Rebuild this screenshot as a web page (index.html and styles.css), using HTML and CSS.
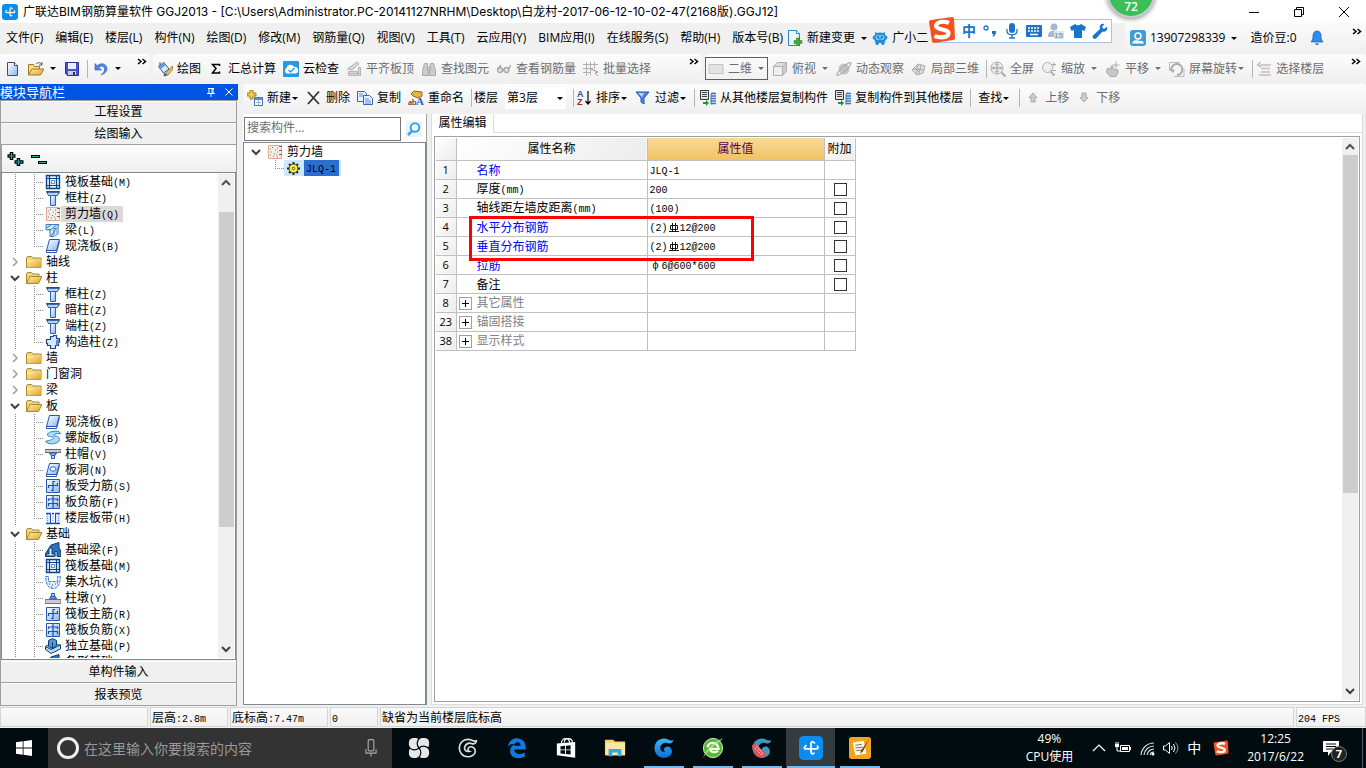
FILE: index.html
```html
<!DOCTYPE html>
<html lang="zh-CN">
<head>
<meta charset="utf-8">
<title>广联达BIM钢筋算量软件 GGJ2013</title>
<link rel="stylesheet" href="styles.css">
</head>
<body>
<svg class="defs" aria-hidden="true">
<defs>
<linearGradient id="gBlue" x1="0" y1="0" x2="1" y2="1"><stop offset="0" stop-color="#fff"/><stop offset="1" stop-color="#8fb4f0"/></linearGradient>
<linearGradient id="gGold" x1="0" y1="0" x2="1" y2="1"><stop offset="0" stop-color="#fff2b0"/><stop offset="1" stop-color="#e0a020"/></linearGradient>
<linearGradient id="gG" x1="0" y1="0" x2="0" y2="1"><stop offset="0" stop-color="#3fb8f8"/><stop offset="1" stop-color="#0b6fd8"/></linearGradient>
</defs>
<symbol id="app" viewBox="0 0 16 16"><rect width="16" height="16" rx="3" fill="#0d8cf0"/><path d="M10.300 4.600Q8.300 2.600 8 5.300V10.500Q8.200 12.600 9.900 11.500M4.600 6.400Q2.400 8.600 4.800 8.600H11.200Q13.500 8.600 12.300 6.800" fill="none" stroke="#fff" stroke-width="1.200" stroke-linecap="round"/></symbol>
<symbol id="new" viewBox="0 0 16 16"><path d="M2.500 1.500h7l3 3v10h-10z" fill="url(#gBlue)" stroke="#34507e"/><path d="M9.500 1.500v3h3" fill="#fff" stroke="#34507e"/></symbol>
<symbol id="open" viewBox="0 0 16 16"><path d="M.5 14V3.500h5l1 2h5V8" fill="#f8dc80" stroke="#a87820"/><path d="M.5 14L4 8h12l-3.500 6z" fill="url(#gGold)" stroke="#a87820"/><path d="M8 3c2-2 4-1.500 5.500 0M14 1v3h-3" fill="none" stroke="#456"/></symbol>
<symbol id="save" viewBox="0 0 16 16"><path d="M1.500 1.500h13v13h-11l-2-2z" fill="#4a55c8" stroke="#28308a"/><path d="M4 2h8v6H4z" fill="#e8ecff"/><path d="M4 10h8v4H4z" fill="#c8ccd8"/><path d="M9 11h2v3H9z" fill="#28308a"/></symbol>
<symbol id="undo" viewBox="0 0 16 16"><path d="M2 2.500V9h6.500L6 6.500c3-3 6-.5 5.500 2.500-.4 2-1.500 3.500-3.500 5C13 12.500 15 9 13.500 5.500 12 2.200 7.500 1.500 4.300 4.800z" fill="#4e86e0" stroke="#2a5cb8" stroke-width=".6"/></symbol>
<symbol id="draw" viewBox="0 0 16 16"><path d="M1.500 5L7 1.500l5 6.500-5.500 4z" fill="#dfe9f6" stroke="#345a88"/><path d="M3 1v7" stroke="#345a88"/><path d="M1.500 5L7 1.500 9 4 3.500 8z" fill="#6b9bd2"/><path d="M15.500 5L9 12l-1.500 3L11 14l5-6z" fill="#f4c450" stroke="#7a5c20" stroke-width=".7"/><path d="M7 12.500c2-.5 3 .5 2.500 2l-3 .8z" fill="#335f9a"/></symbol>
<symbol id="sum" viewBox="0 0 16 16"><path d="M11.500 5V3.500h-7l3.500 4-3.500 4.500h7V10.500" fill="none" stroke="#000" stroke-width="1.500"/></symbol>
<symbol id="cloud" viewBox="0 0 16 16"><rect width="16" height="16" rx="1" fill="#249be8"/><path d="M4 12.500a3 3 0 0 1-.5-5.500A4 4 0 0 1 11 6a3.200 3.200 0 0 1 1.500 6.500z" fill="#fff"/><path d="M5.500 9l2 2 4-4" fill="none" stroke="#249be8" stroke-width="1.500"/></symbol>
<symbol id="level" viewBox="0 0 16 16"><g fill="#d8d8d8" stroke="#b4b4b4"><path d="M1.500 8L11 .8l2 2.200-7 6z"/><path d="M2.500 10.500h9v4h-9zM12.500 6.500h2v8h-2z"/><path d="M3 12.500h8" fill="none"/></g></symbol>
<symbol id="bino" viewBox="0 0 16 16"><g fill="#ccc" stroke="#aaa"><path d="M3.500 2.500h3v4l1 8h-6v-5zM9.500 2.500h3l2 7v5h-6v-8z"/><path d="M6.500 6.500h3v3h-3z"/></g></symbol>
<symbol id="glass" viewBox="0 0 16 16"><g fill="#e4e4e4" stroke="#a5a5a5" stroke-width="1.300"><circle cx="4" cy="9" r="2.500"/><circle cx="10.500" cy="9" r="2.500"/><path d="M6.500 9h1.500M13 8l1.500-4M2 8L5 4" fill="none"/></g></symbol>
<symbol id="batch" viewBox="0 0 16 16"><g fill="none" stroke="#b0b0b0"><path d="M3.500 1v14M7.500 1v13M11.500 1v7M0 3.500h15M0 7.500h10M0 11.500h8"/><path d="M8 8l7 3-3 1 3 3" fill="#eee" stroke="#999"/></g></symbol>
<symbol id="rect" viewBox="0 0 16 16"><path d="M1 3.500h14v9H1z" fill="#e2e2e2" stroke="#c4c4c4"/></symbol>
<symbol id="cube" viewBox="0 0 16 16"><g stroke="#b0b0b0"><path d="M1.500 5.500h9v9h-9z" fill="#eee"/><path d="M1.500 5.500l4-4h9l-4 4z" fill="#dcdcdc"/><path d="M10.500 5.500l4-4v9l-4 4z" fill="#ccc"/></g></symbol>
<symbol id="orbit" viewBox="0 0 16 16"><circle cx="8" cy="8" r="5.500" fill="#c6c6c6"/><path d="M1 14c2 1 13-6 14-12-2-2-15 9-14 12z" fill="none" stroke="#aaa" stroke-width="1.200"/></symbol>
<symbol id="part" viewBox="0 0 16 16"><g fill="#e0e0e0" stroke="#aaa"><path d="M1 9l6-6 7 2-2 7-6 2z"/><path d="M3.500 6.500l6 6M7 3l-2 11M10 4l-2 9M2 8l11 1" fill="none"/></g></symbol>
<symbol id="full" viewBox="0 0 16 16"><circle cx="7" cy="7" r="6" fill="#eee" stroke="#aaa"/><path d="M7 2.500v9M2.500 7h9M5.500 4L7 2.500 8.500 4M5.500 10L7 11.500 8.500 10M4 5.500L2.500 7 4 8.500M10 5.500L11.500 7 10 8.500" fill="none" stroke="#999"/><path d="M11.500 11.500l4 4" stroke="#aaa" stroke-width="2"/></symbol>
<symbol id="zoom" viewBox="0 0 16 16"><circle cx="6.500" cy="6.500" r="5" fill="#eee" stroke="#b0b0b0"/><path d="M9.500 10.500l4 4" stroke="#b0b0b0" stroke-width="2"/><path d="M11 3.500h4M13 1.500v4M11 9.500h4" stroke="#aaa"/></symbol>
<symbol id="pan" viewBox="0 0 16 16"><path d="M11 .5v7M7.500 4h7" stroke="#aaa"/><path d="M2 8l2-1 2 2V5h2v3l5 1v3l-2 3.500H5L1.500 11z" fill="#c8c8c8" stroke="#aaa"/></symbol>
<symbol id="rot" viewBox="0 0 16 16"><path d="M.5 1.500h10M.5 1.500v8M5 15.500h10v-8" fill="none" stroke="#bbb"/><path d="M2.500 10A5.500 5.500 0 1 1 8 14" fill="none" stroke="#aaa" stroke-width="2"/><path d="M1 8l2.500 4L6 9z" fill="#aaa"/></symbol>
<symbol id="floors" viewBox="0 0 16 16"><path d="M4 3h11v2H2zM5 6.500h9v2H5zM5 10h9v2H5zM3 13h12v2H3z" fill="#ccc"/><path d="M5 1L1 4l4 2" fill="none" stroke="#aaa"/></symbol>
<symbol id="add" viewBox="0 0 16 16"><path d="M3 0h3v3h3v3H6v3H3V6H0V3h3z" fill="#f4cf40" stroke="#8a6a10" stroke-width=".8"/><path d="M7.500 7.500h8v8h-8z" fill="#fff" stroke="#4872b8"/><path d="M8 8h7v2H8z" fill="#5a8ad8"/><path d="M9 12.500h5M11.500 10v5" stroke="#9ab4e0"/></symbol>
<symbol id="del" viewBox="0 0 16 16"><path d="M2 2l11 12M13 1.500L2 14" stroke="#333" stroke-width="1.800" fill="none"/></symbol>
<symbol id="copy" viewBox="0 0 16 16"><g fill="#e6f0ff" stroke="#3a66b0"><path d="M.5 1.500h7l2 2v8h-9z"/><path d="M6.500 5.500h6l3 3v6h-9z"/></g><path d="M2 4h4M2 6h4M8 9h4M8 11h6M8 13h6" stroke="#5a8ad8" fill="none"/></symbol>
<symbol id="filter" viewBox="0 0 16 16"><path d="M1 2h13L9 8v6l-3-2V8z" fill="#4a86e4" stroke="#2456a8"/><path d="M3 3h6L7 7z" fill="#b8d4ff"/></symbol>
<symbol id="cpf" viewBox="0 0 16 16"><path d="M.5.500h8v9h-8z" fill="#e4e4e4" stroke="#333"/><path d="M2 2.500h5M2 4.500h5M2 6.500h5" stroke="#444"/><path d="M11 3.500h5M11 6h5M11 8.500h5M11 11h5M11 13.500h5" stroke="#3b72c0" stroke-width="1.400"/><path d="M13 2.500l-2 2v10" stroke="#3b72c0" fill="none"/><path d="M6 10l3 3-3 3v-2H3v-2h3z" fill="#179a3c"/></symbol>
<symbol id="up" viewBox="0 0 16 16"><path d="M8 3l4 4.500h-2V12H6V7.500H4z" fill="#ccc" stroke="#aaa"/></symbol>
<symbol id="down" viewBox="0 0 16 16"><path d="M8 12l4-4.500h-2V3H6v4.500H4z" fill="#ccc" stroke="#aaa"/></symbol>
<symbol id="chg" viewBox="0 0 16 16"><path d="M1.500.5h8l3 3v12h-11z" fill="#eaf6ff" stroke="#2f86b8"/><path d="M9.500.5v3h3" fill="#fff" stroke="#2f86b8"/><path d="M9.500 8h3v2.500H15v3h-2.500V16h-3v-2.500H7v-3h2.500z" fill="#3fae2a" stroke="#2b7d1c" stroke-width=".5"/></symbol>
<symbol id="robot" viewBox="0 0 16 16"><path d="M3 2l2 1a8 8 0 0 1 6 0l2-1v3c2.500.5 3.500 4 .5 5L12 15h-2l-1-2H7l-1 2H4l-1.500-5C-.5 9 .5 5.500 3 5z" fill="#1f8fe0"/><rect x="3.500" y="5" width="9" height="5" rx="2.500" fill="#6fc4f8"/><circle cx="6" cy="7" r=".8" fill="#124"/><circle cx="10" cy="7" r=".8" fill="#124"/><path d="M6.500 8.500q1.500 1 3 0" stroke="#124" fill="none" stroke-width=".6"/></symbol>
<symbol id="user" viewBox="0 0 16 16"><rect width="16" height="16" rx="3" fill="#3f9bd8"/><circle cx="8" cy="6" r="3" fill="none" stroke="#fff" stroke-width="1.500"/><path d="M2 13.500c1-3.500 3-3.500 6-3s5 0 6 3z" fill="#fff"/></symbol>
<symbol id="bell" viewBox="0 0 16 16"><path d="M8 1c3 0 4 2.500 4 5s.5 4 2 6H2c1.500-2 2-3.500 2-6s1-5 4-5z" fill="#2c8cf4" stroke="#1c5cb8" stroke-width=".7"/><path d="M6 13.500q2 3 4 0z" fill="#1c5cb8"/></symbol>
<symbol id="fold" viewBox="0 0 16 16"><path d="M.5 13.500v-10l1-1h4l1.500 1.500h8v9.500z" fill="#f2d27c" stroke="#a88838"/><path d="M1 5.500h14v8H1z" fill="url(#gGold)"/></symbol>
<symbol id="foldo" viewBox="0 0 16 16"><path d="M.5 13.500v-10l1-1h4l1.500 1.500h6V8" fill="#f2d27c" stroke="#a88838"/><path d="M.5 13.500L4 6.500h12l-3.500 7z" fill="url(#gGold)" stroke="#a88838"/></symbol>
<symbol id="raft" viewBox="0 0 16 16"><path d="M1.500 1.500h13v13h-13z" fill="#e6f1ff" stroke="#0e4486" stroke-width="1.400"/><path d="M4.500 1v14M11.500 1v14M1 4.500h14M1 11.500h14" stroke="#0e4486" stroke-width="1.200"/><path d="M6.500 6.500h3v3h-3z" fill="#fff" stroke="#5a90d0"/></symbol>
<symbol id="col" viewBox="0 0 16 16"><path d="M1.500 1.500h13l-2 4h-9z" fill="#b8d0f4" stroke="#2c60a8"/><path d="M5.500 5.500h5v10h-5z" fill="url(#gBlue)" stroke="#2c60c0"/><path d="M1.500 2h13" stroke="#1d4888" stroke-width="1.500"/></symbol>
<symbol id="wall" viewBox="0 0 16 16"><path d="M1.500 1.500h13v13h-13z" fill="#f1eeec" stroke="#e8a48c"/><path d="M13.500 2v12" stroke="#b05020" stroke-dasharray="1 3" stroke-width="3"/><path d="M3 5h1M5 3.500h1M8 6h1M4 8h1M7 9.500h1M10 8h1M3 11h1M6 12h1M9 11h1M10 13h1M10 4h1" stroke="#777"/></symbol>
<symbol id="beam" viewBox="0 0 16 16"><path d="M1 2.500h13l-2 4H9v8H5v-7L1 8z" fill="#d0e6f8" stroke="#3b80b8"/><path d="M1 6l5-3M4 9l9-7M6 14l6-8" stroke="#3b80b8"/><path d="M11 7l3-3v8l-4 3z" fill="#8cc0ea"/></symbol>
<symbol id="slab" viewBox="0 0 16 16"><path d="M4.500 1.500h10l-3 11h-10z" fill="url(#gBlue)" stroke="#2358b0"/><path d="M1.500 12.500v2h10l3-11" fill="none" stroke="#2358b0"/></symbol>
<symbol id="slabh" viewBox="0 0 16 16"><use href="#slab"/><ellipse cx="8" cy="7" rx="3" ry="2.200" fill="#fff" stroke="#2368d0"/></symbol>
<symbol id="spiral" viewBox="0 0 16 16"><path d="M14 1.500C9 .5 2 2 2.500 5c.5 2.500 6 1 6 3S4 10 .5 11.500c3 4 14 2.500 14-2S8 7 9 5s4-1 6.500-1.500z" fill="#a8dcf8" stroke="#2b88c8"/></symbol>
<symbol id="cap" viewBox="0 0 16 16"><path d="M0 3.500h16v3H0z" fill="#ccc" stroke="#666"/><path d="M4.500 7h7l-1.500 2.500H6z" fill="#8ab4f0" stroke="#2358b0"/><path d="M6.500 9.500h3v3h-3z" fill="#cfe0ff" stroke="#2358b0"/></symbol>
<symbol id="rb1" viewBox="0 0 16 16"><path d="M1.500 1.500h13v13h-13z" fill="url(#gBlue)" stroke="#2358c0"/><path d="M10 3.500H8v9H6M3.500 10V7.500h9V5" fill="none" stroke="#1c4cb0" stroke-width="1.200"/></symbol>
<symbol id="rb2" viewBox="0 0 16 16"><path d="M1.500 1.500h13v13h-13z" fill="url(#gBlue)" stroke="#2358c0"/><path d="M8 2v12M3.500 7V5h9v2M3.500 12v-2.500h9V12" fill="none" stroke="#1c4cb0" stroke-width="1.200"/></symbol>
<symbol id="strip" viewBox="0 0 16 16"><path d="M1 4h4v9H1zM11 4h4v9h-4z" fill="#dce8ff"/><path d="M1 3.500h5M10 3.500h5M7 3.500h2M1 13.500h14" stroke="#1c4cb0" stroke-width="1.500"/><path d="M5.500 4v9M10.500 4v9" stroke="#1c4cb0"/><path d="M8 4v9M2.500 4v9M13.500 4v9" stroke="#6a90d8" stroke-dasharray="1 1"/></symbol>
<symbol id="fbeam" viewBox="0 0 16 16"><path d="M.5 14.500v-3L6 3l8-2.500v5l2 4v5h-4v-5h-2v5z" fill="#2f70b8" stroke="#0e3c78"/><path d="M1 14v-2h3V6h3v6h3v2z" fill="#dcecff" stroke="#0e3c78"/></symbol>
<symbol id="pit" viewBox="0 0 16 16"><path d="M.5 2.500h3v5h9v-5h3C15 10 13 14.500 8 14.500S1 10 .5 2.500z" fill="#dcecff" stroke="#3878d0" stroke-dasharray="3 1"/><path d="M4 10h1M7 11h1M10 10h1M6 13h1M12 9h1" stroke="#2358b0"/></symbol>
<symbol id="pier" viewBox="0 0 16 16"><path d="M0 9.500h16v4H0z" fill="#ccc" stroke="#777"/><path d="M4.500 9l1.500-3h4l1.500 3z" fill="#6a9ce8" stroke="#2358b0"/><path d="M6.500 3.500h3v3h-3z" fill="#a8c8ff" stroke="#2358b0"/></symbol>
<symbol id="iso" viewBox="0 0 16 16"><path d="M.5 8.500L5 6l10.500 1v4L6 15.500l-5.500-4z" fill="#b8dcf4" stroke="#0e3c78"/><path d="M3.500 2.500l4-2 4 2v5l-4 3-4-2z" fill="#5a94cc" stroke="#0e3c78"/><path d="M7.500 4.500v6M.5 8.500l5.500 3 9.500-4.500" fill="none" stroke="#0e3c78"/></symbol>
<symbol id="gear" viewBox="0 0 16 16"><path d="M8 0v16M0 8h16M2.500 2.500l11 11M13.500 2.500l-11 11" stroke="#222" stroke-width="2.500"/><circle cx="8" cy="8" r="5.500" fill="#f8ee30" stroke="#222"/><circle cx="8" cy="8" r="1.500" fill="#fff" stroke="#222"/></symbol>
<symbol id="poly" viewBox="0 0 16 16"><path d="M5.500 2.500h3v-1h3v3h3v4h-1v3h-3v3h-5v-3h-3v-2h-1v-4h4z" fill="#d8e8ff" stroke="#1c4890" stroke-width="1.200"/><path d="M11 6l3-1v5l-3 2z" fill="#5a88c8"/></symbol>
<symbol id="mag" viewBox="0 0 16 16"><path d="M0 0h16v16H0z" fill="#e8f4fd"/><circle cx="9" cy="6.500" r="4.300" fill="#fff" stroke="#3ca0ea" stroke-width="2"/><path d="M6 10l-4 4" stroke="#3ca0ea" stroke-width="2.500"/></symbol>
<symbol id="cd" viewBox="0 0 10 10"><path d="M1 3l4 4 4-4" fill="none" stroke="#404040" stroke-width="2"/></symbol>
<symbol id="cu" viewBox="0 0 10 10"><path d="M1 7l4-4 4 4" fill="none" stroke="#505050" stroke-width="2"/></symbol>
<symbol id="cr" viewBox="0 0 10 10"><path d="M3 1l4 4-4 4" fill="none" stroke="#a0a0a0" stroke-width="1.500"/></symbol>
<symbol id="more" viewBox="0 0 10 8"><path d="M1 1l3 2.500L1 6M5.500 1l3 2.500L5.500 6" fill="none" stroke="#000" stroke-width="1.500"/></symbol>
<symbol id="rebar" viewBox="0 0 12 12"><path d="M2.500 3.500h7v4h-7zM4.500 1v9M7.500 1v9M1 9.500h10" fill="none" stroke="#000" stroke-width=".9"/></symbol>
<symbol id="sg" viewBox="0 0 28 28"><path d="M3 4l21-3q2 0 2 2l1 19q0 2-2 2L6 27q-2 0-2-2L1 6q0-2 2-2z" fill="#f4511e"/><path d="M21 7C16 4.500 8 6 8 10s13 3 12.500 7.500S12 22 6.500 20" fill="none" stroke="#fff" stroke-width="4.200"/></symbol>
<symbol id="win" viewBox="0 0 16 16"><path d="M0 2.300L6.700 1.300V7.600H0zM7.500 1.200L16 0v7.600H7.500zM0 8.400h6.700v6.300L0 13.700zM7.500 8.400H16V16l-8.500-1.200z" fill="#fff"/></symbol>
<symbol id="mic" viewBox="0 0 16 16"><rect x="5.500" y=".5" width="5" height="10" rx="1" fill="none" stroke="#aaa"/><path d="M3.500 9v3.500h9V9M8 12.500v3" fill="none" stroke="#aaa"/></symbol>
<symbol id="pin" viewBox="0 0 24 24"><g fill="#e8e8e8"><rect x="1" y="1" width="12" height="12" rx="5"/><rect x="11" y="1" width="12" height="12" rx="5"/><rect x="1" y="11" width="12" height="12" rx="5"/><rect x="11" y="11" width="12" height="12" rx="5"/></g><g fill="none" stroke="#000c10" stroke-width="1.300"><path id="pt" d="M12 12C9 8.500 10 4 13 .5"/><use href="#pt" transform="rotate(90 12 12)"/><use href="#pt" transform="rotate(180 12 12)"/><use href="#pt" transform="rotate(270 12 12)"/></g></symbol>
<symbol id="dragon" viewBox="0 0 24 24"><path d="M22 3.500C17 5 15-.5 8 2.500 1 5.500 0 14 4 19s13 4.500 16-.5c2-4-1-8.500-5-8-3.500.5-4 4.500-1.500 5.500-4 1-6-2-5.500-5C9 7 13 5 17 7c3 .5 5-1.500 5-3.500z"/></symbol>
<symbol id="edge" viewBox="0 0 24 24"><path d="M2 11C3 4 8 1 13 1.500c6 .5 9 5 8.500 12H9c.5 6 8 6 11.500 3.500v4.500c-6 3-16 2-16-6 0-4 2-6.500 5-8C4.500 7.500 3 9 2 11zm7-1.500h7c0-5-6.500-5-7 0z" fill="#0f7ae0"/></symbol>
<symbol id="store" viewBox="0 0 24 24"><path d="M2 7l20-1.500v17L2 20z" fill="#fff"/><path d="M7 7c0-7 9-7 9 0M10 6c0-6 9-5 9 0" fill="none" stroke="#fff" stroke-width="1.300"/><path d="M6 10l5-.5v4H6zM12 9.500l5-.5v4.500h-5zM6 14.500h5v4l-5-.5zM12 14.500h5V19l-5-.5z" fill="#000c10"/></symbol>
<symbol id="exp" viewBox="0 0 24 24"><path d="M1 3h9l2 2h11v15H1z" fill="#f4d068"/><path d="M2 6h21v14H2z" fill="#fbe7a0"/><path d="M5 21v-7q0-1 1-1h12q1 0 1 1v7h-4v-4H9v4z" fill="#3aa8e0"/></symbol>
<symbol id="ie" viewBox="0 0 24 24"><circle cx="12" cy="12" r="10.500" fill="#53b934" stroke="#dff3d4"/><path d="M6 11c1-6 11-7 12 2H9c0 4 6 4.500 8.500 2" fill="none" stroke="#fff" stroke-width="2.500"/><path d="M1 23C5 12 12 6 23 1c-4 6-12 8-22 22z" fill="#bff08c" opacity=".7"/></symbol>
<symbol id="note" viewBox="0 0 24 24"><rect width="24" height="24" rx="3" fill="#f2a61e"/><path d="M4 6l12-2 3 14-12 2z" fill="#fff8e0"/><path d="M7 9l7-1M7 12l8-1M8 15l6-1" stroke="#666"/><path d="M22 2L13 15l-1 3 3-2z" fill="#8a3c10"/></symbol>
</svg>

<header class="title">
  <svg class="i"><use href="#app"/></svg>
  <h1>广联达BIM钢筋算量软件 GGJ2013 - [C:\Users\Administrator.PC-20141127NRHM\Desktop\白龙村-2017-06-12-10-02-47(2168版).GGJ12]</h1>
  <div class="winbtns">
    <button aria-label="最小化"><svg viewBox="0 0 12 12"><path d="M1 6.500h10" stroke="#000"/></svg></button>
    <button aria-label="还原"><svg viewBox="0 0 12 12"><path d="M1.500 3.500h7v7h-7zM3.500 3V1.500h7v7H9" fill="none" stroke="#000"/></svg></button>
    <button aria-label="关闭"><svg viewBox="0 0 12 12"><path d="M1 1l10 10M11 1L1 11" stroke="#000"/></svg></button>
  </div>
</header>

<nav class="menu">
  <div class="menus"><button>文件(F)</button><button>编辑(E)</button><button>楼层(L)</button><button>构件(N)</button><button>绘图(D)</button><button>修改(M)</button><button>钢筋量(Q)</button><button>视图(V)</button><button>工具(T)</button><button>云应用(Y)</button><button>BIM应用(I)</button><button>在线服务(S)</button><button>帮助(H)</button><button>版本号(B)</button></div>
  <button><svg class="i"><use href="#chg"/></svg>新建变更<i class="dd"></i></button>
  <button><svg class="i"><use href="#robot"/></svg>广小二</button>
  <div class="account">
    <button><svg class="i"><use href="#user"/></svg>13907298339<i class="dd"></i></button>
    <button>造价豆:0</button>
    <button aria-label="消息"><svg class="i"><use href="#bell"/></svg></button>
    <svg class="more"><use href="#more"/></svg>
  </div>
</nav>

<div class="bars">
  <div class="bar file">
    <button aria-label="新建"><svg class="i"><use href="#new"/></svg></button>
    <button aria-label="打开"><svg class="i"><use href="#open"/></svg><i class="dd"></i></button>
    <button aria-label="保存"><svg class="i"><use href="#save"/></svg></button>
    <i class="sep"></i>
    <button aria-label="撤销"><svg class="i"><use href="#undo"/></svg><i class="dd"></i></button>
    <svg class="more"><use href="#more"/></svg>
  </div>
  <div class="bar calc">
    <button><svg class="i"><use href="#draw"/></svg>绘图</button>
    <button><svg class="i"><use href="#sum"/></svg>汇总计算</button>
    <button><svg class="i"><use href="#cloud"/></svg>云检查</button>
    <button disabled><svg class="i"><use href="#level"/></svg>平齐板顶</button>
    <button disabled><svg class="i"><use href="#bino"/></svg>查找图元</button>
    <button disabled><svg class="i"><use href="#glass"/></svg>查看钢筋量</button>
    <button disabled><svg class="i"><use href="#batch"/></svg>批量选择</button>
    <svg class="more"><use href="#more"/></svg>
  </div>
  <div class="bar view">
    <button disabled class="framed"><svg class="i"><use href="#rect"/></svg>二维<i class="dd"></i></button>
    <button disabled><svg class="i"><use href="#cube"/></svg>俯视<i class="dd"></i></button>
    <button disabled><svg class="i"><use href="#orbit"/></svg>动态观察</button>
    <button disabled><svg class="i"><use href="#part"/></svg>局部三维</button>
    <i class="sep"></i>
    <button disabled><svg class="i"><use href="#full"/></svg>全屏</button>
    <button disabled><svg class="i"><use href="#zoom"/></svg>缩放<i class="dd"></i></button>
    <button disabled><svg class="i"><use href="#pan"/></svg>平移<i class="dd"></i></button>
    <button disabled><svg class="i"><use href="#rot"/></svg>屏幕旋转<i class="dd near"></i></button>
    <i class="sep"></i>
    <button disabled><svg class="i"><use href="#floors"/></svg>选择楼层</button>
    <svg class="more"><use href="#more"/></svg>
  </div>
</div>

<main>
  <aside class="side">
    <div class="sidehead"><h2>模块导航栏</h2>
      <button aria-label="固定"><svg viewBox="0 0 10 10"><path d="M2 1.500h6M3 1v5M7 1v5M6 1v5M1 6.500h8M5 7v3" stroke="#fff" fill="none"/></svg></button>
      <button aria-label="关闭"><svg viewBox="0 0 10 10"><path d="M1.500 1.500l7 7M8.500 1.500l-7 7" stroke="#fff"/></svg></button>
    </div>
    <div class="sidebody">
    <button class="sec">工程设置</button>
    <button class="sec">绘图输入</button>
    <div class="pm">
      <button aria-label="全部展开"><svg viewBox="0 0 18 16"><path d="M4.500 1v8M.5 5h8M11.500 7v8M7.500 11h9" stroke="#000" stroke-width="3.500"/><path d="M4.500 2v6M1.500 5h6M11.500 8v6M8.500 11h7" stroke="#20b0a0" stroke-width="1.200"/></svg></button>
      <button aria-label="全部折叠"><svg viewBox="0 0 18 16"><path d="M0 5.500h9M7 11.500h9" stroke="#000" stroke-width="3"/><path d="M1 5.500h7M8 11.500h7" stroke="#20b0a0"/></svg></button>
    </div>
    <div class="treebox">
      <ul class="tree">
        <li class="leaf"><svg class="i"><use href="#raft"/></svg><span>筏板基础<b>(M)</b></span></li>
        <li class="leaf"><svg class="i"><use href="#col"/></svg><span>框柱<b>(Z)</b></span></li>
        <li class="leaf cur"><svg class="i"><use href="#wall"/></svg><span>剪力墙<b>(Q)</b></span></li>
        <li class="leaf"><svg class="i"><use href="#beam"/></svg><span>梁<b>(L)</b></span></li>
        <li class="leaf last"><svg class="i"><use href="#slab"/></svg><span>现浇板<b>(B)</b></span></li>
        <li class="dir"><svg class="c"><use href="#cr"/></svg><svg class="i"><use href="#fold"/></svg><span>轴线</span></li>
        <li class="dir"><svg class="c"><use href="#cd"/></svg><svg class="i"><use href="#foldo"/></svg><span>柱</span></li>
        <li class="leaf"><svg class="i"><use href="#col"/></svg><span>框柱<b>(Z)</b></span></li>
        <li class="leaf"><svg class="i"><use href="#col"/></svg><span>暗柱<b>(Z)</b></span></li>
        <li class="leaf"><svg class="i"><use href="#col"/></svg><span>端柱<b>(Z)</b></span></li>
        <li class="leaf last"><svg class="i"><use href="#poly"/></svg><span>构造柱<b>(Z)</b></span></li>
        <li class="dir"><svg class="c"><use href="#cr"/></svg><svg class="i"><use href="#fold"/></svg><span>墙</span></li>
        <li class="dir"><svg class="c"><use href="#cr"/></svg><svg class="i"><use href="#fold"/></svg><span>门窗洞</span></li>
        <li class="dir"><svg class="c"><use href="#cr"/></svg><svg class="i"><use href="#fold"/></svg><span>梁</span></li>
        <li class="dir"><svg class="c"><use href="#cd"/></svg><svg class="i"><use href="#foldo"/></svg><span>板</span></li>
        <li class="leaf"><svg class="i"><use href="#slab"/></svg><span>现浇板<b>(B)</b></span></li>
        <li class="leaf"><svg class="i"><use href="#spiral"/></svg><span>螺旋板<b>(B)</b></span></li>
        <li class="leaf"><svg class="i"><use href="#cap"/></svg><span>柱帽<b>(V)</b></span></li>
        <li class="leaf"><svg class="i"><use href="#slabh"/></svg><span>板洞<b>(N)</b></span></li>
        <li class="leaf"><svg class="i"><use href="#rb1"/></svg><span>板受力筋<b>(S)</b></span></li>
        <li class="leaf"><svg class="i"><use href="#rb2"/></svg><span>板负筋<b>(F)</b></span></li>
        <li class="leaf last"><svg class="i"><use href="#strip"/></svg><span>楼层板带<b>(H)</b></span></li>
        <li class="dir"><svg class="c"><use href="#cd"/></svg><svg class="i"><use href="#foldo"/></svg><span>基础</span></li>
        <li class="leaf"><svg class="i"><use href="#fbeam"/></svg><span>基础梁<b>(F)</b></span></li>
        <li class="leaf"><svg class="i"><use href="#raft"/></svg><span>筏板基础<b>(M)</b></span></li>
        <li class="leaf"><svg class="i"><use href="#pit"/></svg><span>集水坑<b>(K)</b></span></li>
        <li class="leaf"><svg class="i"><use href="#pier"/></svg><span>柱墩<b>(Y)</b></span></li>
        <li class="leaf"><svg class="i"><use href="#rb1"/></svg><span>筏板主筋<b>(R)</b></span></li>
        <li class="leaf"><svg class="i"><use href="#rb2"/></svg><span>筏板负筋<b>(X)</b></span></li>
        <li class="leaf"><svg class="i"><use href="#iso"/></svg><span>独立基础<b>(P)</b></span></li>
        <li class="leaf"><svg class="i"><use href="#fbeam"/></svg><span>条形基础<b>(T)</b></span></li>
      </ul>
      <div class="scroll"><svg><use href="#cu"/></svg><div class="track"><i class="gap"></i><i class="thumb"></i><i class="rest"></i></div><svg><use href="#cd"/></svg></div>
    </div>
    <button class="sec">单构件输入</button>
    <button class="sec">报表预览</button>
    </div>
  </aside>

  <section class="work">
    <div class="bar edit">
      <button><svg class="i"><use href="#add"/></svg>新建<i class="dd near"></i></button>
      <button><svg class="i"><use href="#del"/></svg>删除</button>
      <button><svg class="i"><use href="#copy"/></svg>复制</button>
      <button><svg class="i" viewBox="0 0 16 16"><path d="M3 4l3-3 8 1v4l-4 2-5-2z" fill="#e8b43c" stroke="#8a6a20"/><text x="0" y="15" font-family="Liberation Serif" font-size="9">ab</text><text x="8" y="15" font-family="Liberation Serif" font-weight="bold" font-size="11" fill="#2a62c0">A</text></svg>重命名</button>
      <i class="sep tight"></i>
      <label for="floor">楼层</label>
      <div class="combo"><select id="floor"><option>第3层</option></select><i class="dd"></i></div>
      <i class="sep tight"></i>
      <button><svg class="i" viewBox="0 0 16 16"><text x="1" y="7" font-family="Liberation Sans" font-weight="bold" font-size="9" fill="#2a50a0">A</text><text x="1" y="15" font-family="Liberation Sans" font-weight="bold" font-size="9" fill="#a02828">Z</text><path d="M12 1v13M9.500 11l2.500 3 2.500-3" stroke="#000" fill="none" stroke-width="1.200"/></svg>排序<i class="dd near"></i></button>
      <button><svg class="i"><use href="#filter"/></svg>过滤<i class="dd near"></i></button>
      <i class="sep"></i>
      <button><svg class="i"><use href="#cpf"/></svg>从其他楼层复制构件</button>
      <button><svg class="i"><use href="#cpf"/></svg>复制构件到其他楼层</button>
      <i class="sep"></i>
      <button class="seek">查找<i class="dd near"></i></button>
      <i class="sep"></i>
      <button disabled><svg class="i"><use href="#up"/></svg>上移</button>
      <button disabled><svg class="i"><use href="#down"/></svg>下移</button>
    </div>
    <div class="cols">
      <div class="comps">
        <div class="search"><input type="text" placeholder="搜索构件..." aria-label="搜索构件"><button aria-label="搜索"><svg class="i"><use href="#mag"/></svg></button></div>
        <ul class="tree list">
          <li class="dir"><svg class="c"><use href="#cd"/></svg><svg class="i"><use href="#wall"/></svg><span>剪力墙</span></li>
          <li class="item"><em><svg><use href="#gear"/></svg><span><b>JLQ-1</b></span></em></li>
        </ul>
      </div>
      <div class="props">
        <div class="tabs"><button class="tab">属性编辑</button></div>
        <div class="frame">
          <div class="tablearea">
            <table>
              <colgroup><col class="c1"><col class="c2"><col class="c3"><col class="c4"></colgroup>
              <thead><tr><th></th><th>属性名称</th><th class="gold">属性值</th><th>附加</th></tr></thead>
              <tbody>
                <tr><th>1</th><td class="n blue">名称</td><td><b>JLQ-1</b></td><td></td></tr>
                <tr><th>2</th><td class="n">厚度<b>(mm)</b></td><td><b>200</b></td><td class="k"><input type="checkbox" aria-label="厚度"></td></tr>
                <tr><th>3</th><td class="n">轴线距左墙皮距离<b>(mm)</b></td><td><b>(100)</b></td><td class="k"><input type="checkbox" aria-label="轴线距左墙皮距离"></td></tr>
                <tr><th>4</th><td class="n blue">水平分布钢筋</td><td><b>(2)<svg class="rb"><use href="#rebar"/></svg>12@200</b></td><td class="k"><input type="checkbox" aria-label="水平分布钢筋"></td></tr>
                <tr><th>5</th><td class="n blue">垂直分布钢筋</td><td><b>(2)<svg class="rb"><use href="#rebar"/></svg>12@200</b></td><td class="k"><input type="checkbox" aria-label="垂直分布钢筋"></td></tr>
                <tr><th>6</th><td class="n blue">拉筋</td><td><b><span class="phi">ф</span>6@600*600</b></td><td class="k"><input type="checkbox" aria-label="拉筋"></td></tr>
                <tr><th>7</th><td class="n">备注</td><td></td><td class="k"><input type="checkbox" aria-label="备注"></td></tr>
                <tr><th>8</th><td class="g"><button aria-label="展开"></button>其它属性</td><td></td><td></td></tr>
                <tr><th>23</th><td class="g"><button aria-label="展开"></button>锚固搭接</td><td></td><td></td></tr>
                <tr><th>38</th><td class="g"><button aria-label="展开"></button>显示样式</td><td></td><td></td></tr>
              </tbody>
            </table>
            <div class="redbox"></div>
          </div>
          <div class="scroll big"><svg><use href="#cu"/></svg><div class="track"><i class="thumb"></i><i class="rest"></i></div><svg><use href="#cd"/></svg></div>
        </div>
      </div>
    </div>
  </section>
</main>

<footer class="status">
  <div class="s1"></div><div class="s2">层高<b>:2.8m</b></div><div class="s3">底标高<b>:7.47m</b></div><div class="s4"><b>0</b></div><div class="s5">缺省为当前楼层底标高</div><div class="s6"><b>204 FPS</b></div>
</footer>

<div class="taskbar">
  <button class="start" aria-label="开始"><svg class="i"><use href="#win"/></svg></button>
  <div class="find"><i class="ring"></i><input type="text" placeholder="在这里输入你要搜索的内容" aria-label="搜索"><svg class="m"><use href="#mic"/></svg></div>
  <div class="apps">
    <button aria-label="应用"><svg><use href="#pin"/></svg></button>
    <button aria-label="浏览器"><svg class="outline"><use href="#dragon"/></svg></button>
    <button aria-label="Edge"><svg><use href="#edge"/></svg></button>
    <button aria-label="应用商店"><svg><use href="#store"/></svg></button>
    <button aria-label="文件资源管理器"><svg><use href="#exp"/></svg></button>
    <button class="run" aria-label="浏览器"><svg class="azure"><use href="#dragon"/></svg></button>
    <button class="run" aria-label="安全浏览器"><svg><use href="#ie"/></svg></button>
    <button class="run" aria-label="浏览器"><svg class="teal" viewBox="0 0 24 24"><use href="#dragon" width="24" height="24"/><path d="M1 9l4-2 12 12-4 4q-10 0-12-14z" fill="#e05058"/><path d="M4 12l8 8M6 10l8 9" stroke="#fff" stroke-dasharray="2 1"/></svg></button>
    <button class="run on" aria-label="广联达"><svg><use href="#app"/></svg></button>
    <button class="run" aria-label="便笺"><svg><use href="#note"/></svg></button>
  </div>
  <div class="tray">
    <div class="cpu">49%<br>CPU使用</div>
    <svg class="t" viewBox="0 0 16 16"><path d="M2 11l6-6 6 6" fill="none" stroke="#fff" stroke-width="1.200"/></svg>
    <svg class="t" viewBox="0 0 16 16"><path d="M5.500 5.500h9v6h-9z" fill="none" stroke="#fff"/><path d="M7 7h6v3H7zM15 7h1v3h-1zM0 4h4v3H0z" fill="#fff"/><path d="M1 2v2M3 2v2M2 6v5h3" stroke="#fff" fill="none"/></svg>
    <svg class="t" viewBox="0 0 16 16"><g fill="none" stroke="#ddd" stroke-width="1.200"><path d="M2 15A13 13 0 0 1 15 3M5 15A10 10 0 0 1 15 6M8 15a7 7 0 0 1 7-6M11 15a4 4 0 0 1 4-3"/></g><circle cx="14" cy="14" r="1.500" fill="#fff"/></svg>
    <svg class="t" viewBox="0 0 16 16"><g fill="none" stroke="#fff"><path d="M.5 6v4h2l4 3.500v-11L2.500 6zM8.500 6q1.500 2 0 4M10.500 4q3 4 0 8"/><path d="M12.500 2.500q5 5.500 0 11" stroke="#999"/></g></svg>
    <span class="ime">中</span>
    <svg class="t"><use href="#sg"/></svg>
    <div class="clock">12:25<br>2017/6/22</div>
    <div class="notif"><svg class="t" viewBox="0 0 16 16"><path d="M0 1h16v11H8l-3 4v-4H0z" fill="#fff"/><path d="M3 4h10M3 6.500h10M3 9h7" stroke="#000c10"/></svg><span>7</span></div>
    <i class="peek"></i>
  </div>
</div>

<div class="sogou">
  <svg class="slogo"><use href="#sg"/></svg>
  <div class="simes">
    <span>中</span>
    <svg viewBox="0 0 16 16"><circle cx="4" cy="5" r="2" fill="none" stroke="#1c74c8" stroke-width="1.300"/><path d="M10 8h4q.5 4-3.500 6l1-3H10z" fill="#1c74c8"/></svg>
    <svg viewBox="0 0 16 16"><rect x="5" y="0" width="6" height="10" rx="3" fill="#1c74c8"/><path d="M3 6v2c0 5 10 5 10 0V6M8 12v3M5 15h6" fill="none" stroke="#1c74c8" stroke-width="1.300"/></svg>
    <svg viewBox="0 0 16 16"><rect y="2" width="16" height="12" rx="1" fill="#1c74c8"/><path d="M2 5h12M2 8h12" stroke="#fff" stroke-width="1.500" stroke-dasharray="2 1"/><path d="M4 11.500h8" stroke="#fff" stroke-width="1.500"/></svg>
    <svg viewBox="0 0 16 16"><circle cx="6" cy="4" r="3.500" fill="#a8b8cc"/><path d="M0 14c0-6 3-6 6-6s5 1 6 6z" fill="#a8b8cc"/><path d="M6 8h10v8H6z" fill="#dde4ec"/><text x="6" y="15" font-size="8" font-family="Liberation Sans" font-weight="bold" fill="#8ca0b8">15</text></svg>
    <svg viewBox="0 0 16 16"><path d="M5 1q3 2.500 6 0l5 3-1.500 4L12 7v8H4V7L1.500 8 0 4z" fill="#1c74c8"/></svg>
    <svg viewBox="0 0 16 16"><path d="M15 3.500L12 6l-2-2 2.500-3C9 0 7 2.500 8 6L1 12.500q-1 2 .5 3t3-.5L10.500 8.500c3 1 5.500-1.500 4.500-5z" fill="#1c74c8"/></svg>
  </div>
</div>
<div class="ball">72</div>
</body>
</html>
```
FILE: styles.css
```css
* { box-sizing: border-box; }
html, body { height: 100%; }
body {
  margin: 0;
  display: flex;
  flex-direction: column;
  overflow: hidden;
  position: relative;
  background: #f0f0f0;
  color: #000;
  font: 12px/16px "Open Sans", "Noto Sans CJK SC", sans-serif;
}
.defs { position: absolute; width: 0; height: 0; }
h1, h2 { margin: 0; font-size: 12px; font-weight: 400; }
button { border: 0; padding: 0; background: none; color: inherit; font: inherit; white-space: nowrap; }
svg { display: block; flex: none; }
.i { width: 16px; height: 16px; }

/* title */
.title { height: 23px; flex: none; display: flex; align-items: center; gap: 5px; padding-left: 2px; background: #fff; }
.title h1 { flex: 1; white-space: nowrap; font-family: Inter, "Noto Sans CJK SC", sans-serif; }
.winbtns { display: flex; }
.winbtns button { width: 45px; height: 22px; display: flex; align-items: center; justify-content: center; }
.winbtns svg { width: 12px; height: 12px; }

/* menu */
.menu { height: 30px; flex: none; display: flex; align-items: center; gap: 4px; padding-left: 6px; }
.menus { display: flex; gap: 12px; }
.menu button { display: flex; align-items: center; gap: 4px; }
.account { margin-left: auto; height: 100%; display: flex; align-items: center; gap: 12px; width: 241px; padding: 0 4px 0 5px; background: linear-gradient(#fafafa, #f0f0f0); }
.account .more { margin-left: auto; align-self: flex-start; margin-top: 5px; }
.dd { width: 13px; height: 16px; display: flex; align-items: center; justify-content: flex-end; margin-left: -4px; }
.dd::after { content: ""; border: 3px solid transparent; border-top-color: currentColor; border-bottom: 0; margin-right: 1px; }
.dd.near { width: 8px; }
.more { width: 10px; height: 8px; }

/* toolbars */
.bars { height: 30px; flex: none; display: flex; gap: 3px; padding-top: 1px; margin-bottom: 1px; }
.bar { display: flex; align-items: center; gap: 7px; border-radius: 3px; background: linear-gradient(#fcfcfc, #efefef); }
.bar button { display: flex; align-items: center; gap: 4px; }
.bar button:disabled { color: #6d6d6d; }
.bar .more { margin-left: auto; margin-right: 3px; align-self: flex-start; margin-top: 4px; }
.file { width: 150px; padding-left: 5px; }
.calc { width: 549px; padding-left: 4px; }
.view { flex: 1; }
.view .more { margin-right: 5px; }
.framed { height: 23px; padding: 0 2px; border: 1px solid #606060; margin-right: -3px; }
.sep { width: 1px; height: 18px; background: #b4b4b4; margin-right: -2px; }
.view .sep { margin-right: -4px; }
.sep.tight { margin-right: -5px; }
.edit { height: 30px; flex: none; padding: 3px 0 5px 4px; }
.combo { display: flex; align-items: center; width: 61px; height: 22px; background: #fff; }
.combo select { flex: 1; width: 40px; border: 0; padding: 0 2px; background: none; appearance: none; font: inherit; color: inherit; }
.combo .dd { margin-right: 2px; }
.seek { padding: 0 2px; }

/* main layout */
main { flex: 1; min-height: 0; display: flex; gap: 5px; }
.side { width: 238px; flex: none; display: flex; flex-direction: column; }
.sidehead { height: 16px; display: flex; align-items: center; padding-right: 4px; gap: 8px; background: #0054e3; color: #fff; flex: none; }
.sidehead h2 { flex: 1; font-size: 13px; }
.sidehead svg { width: 10px; height: 10px; }
.sidebody { flex: 1; min-height: 0; display: flex; flex-direction: column; margin-right: 1px; border: 1px solid #a0a0a0; }
.sec { height: 22px; flex: none; border-bottom: 1px solid #a0a0a0; border-top: 1px solid #fff; background: #f0f0f0; }
.sec:last-child { border-bottom: 0; }
.pm { height: 27px; flex: none; display: flex; align-items: center; gap: 6px; padding-left: 5px; background: linear-gradient(#fcfcfc, #efefef); border-left: 1px solid #a0a0a0; }
.pm svg { width: 18px; height: 16px; }
.treebox { flex: 1; min-height: 0; display: flex; border: 1px solid #828790; margin-bottom: 1px; background: #fff; padding: 1px; overflow: hidden; }
.tree { flex: 1; margin: 0; padding: 0; list-style: none; overflow: hidden; }
.tree li { display: flex; align-items: center; height: 16px; white-space: nowrap; }
.tree span { padding: 0 4px; }
b { font: 10px/12px "Liberation Mono", "DejaVu Sans Mono", monospace; }
.leaf::before {
  content: ""; width: 42px; height: 16px; flex: none;
  background:
    repeating-linear-gradient(#888 0 1px, transparent 1px 2px) 12px 0 / 1px 16px no-repeat,
    repeating-linear-gradient(#888 0 1px, transparent 1px 2px) 31px 0 / 1px 16px no-repeat,
    repeating-linear-gradient(90deg, #888 0 1px, transparent 1px 2px) 31px 8px / 10px 1px no-repeat;
}
.leaf.last::before { background-size: 1px 16px, 1px 9px, 10px 1px; }
.leaf.cur span { background: #d9d9d9; }
.c { width: 10px; height: 10px; margin: 0 2px 0 7px; }
.dir::before { content: none; }
.dir .c + .i { margin-left: 4px; }
.scroll { width: 16px; flex: none; display: flex; flex-direction: column; align-items: center; background: #f0f0f0; padding: 4px 0; }
.scroll svg { width: 10px; height: 10px; }
.track { flex: 1; width: 15px; margin: 3px 0; display: flex; flex-direction: column; }
.gap { flex: 21; }
.thumb { flex: 314; background: #cdcdcd; }
.rest { flex: 114; }

.work { flex: 1; min-width: 0; display: flex; flex-direction: column; }
.cols { flex: 1; min-height: 0; display: flex; gap: 4px; }
.comps { width: 184px; flex: none; display: flex; flex-direction: column; background: #fff; margin-bottom: 1px; }
.search { height: 28px; flex: none; display: flex; align-items: flex-end; gap: 5px; padding: 0 0 1px 1px; border-right: 1px solid #a0a0a0; }
.search input { width: 157px; height: 24px; border: 1px solid #767676; padding: 0 2px 4px; font: inherit; }
.search input::placeholder { color: #6d6d6d; opacity: 1; }
.search button { padding-bottom: 4px; }
.list { border: 1px solid #828790; border-width: 1px 2px 1px 1px; padding-top: 1px; }
.item::before {
  content: ""; width: 40px; height: 16px; flex: none;
  background:
    repeating-linear-gradient(#888 0 1px, transparent 1px 2px) 31px 0 / 1px 9px no-repeat,
    repeating-linear-gradient(90deg, #888 0 1px, transparent 1px 2px) 31px 8px / 9px 1px no-repeat;
}
.item em { display: flex; align-items: center; gap: 4px; padding: 0 2px 0 3px; background: #cce8ff; height: 16px; }
.item em svg { width: 13px; height: 13px; }
.item em span { background: #2a6fd0; padding: 0 3px 0 2px; }

.props { flex: 1; min-width: 0; display: flex; flex-direction: column; margin: 0 3px 1px 0; background: #fff; border: 1px solid #dcdcdc; border-top: 0; }
.tabs { height: 19px; flex: none; border-bottom: 1px solid #dcdcdc; display: flex; }
.tab { height: 19px; width: 62px; background: #fff; border-right: 1px solid #dcdcdc; padding-bottom: 2px; }
.frame { flex: 1; min-height: 0; margin: 3px 2px 2px; padding: 1px; border: 1px solid #a0a0a4; display: flex; }
.tablearea { flex: 1; position: relative; }
table { border-collapse: collapse; table-layout: fixed; width: 419px; line-height: 14px; }
.c1 { width: 20px; } .c2 { width: 191px; } .c3 { width: 177px; } .c4 { width: 31px; }
th, td { height: 19px; padding: 0; border: 1px solid #c0c0c0; border-top: 0; border-left: 0; font-weight: 400; text-align: left; white-space: nowrap; }
th { background: linear-gradient(135deg, #fff, #ececec); text-align: center; font-size: 11px; }
thead th { height: 22px; font-size: 12px; }
thead .gold { background: linear-gradient(#f8d898, #f1c263); color: #5c0050; }
td { padding: 1px 0 0 2px; }
td.n { padding: 2px 0 0 20px; }
td.blue { color: #00f; }
td.k { padding: 1px 0 0 1px; text-align: center; }
td.k input { appearance: none; display: block; margin: 0 auto; width: 13px; height: 13px; border: 1px solid #333; background: #fff; }
td.g { color: #808080; padding: 2px 0 0 2px; }
td.g button { display: inline-block; vertical-align: middle; width: 13px; height: 13px; margin: 0 5px 1px 0; border: 1px solid #a0a0a0; background: linear-gradient(#000, #000) center / 7px 1px no-repeat, linear-gradient(#000, #000) center / 1px 7px no-repeat; }
.rb { display: inline-block; width: 12px; height: 12px; vertical-align: middle; }
.phi { display: inline-block; width: 12px; text-align: center; }
.redbox { position: absolute; left: 33px; top: 78px; width: 285px; height: 45px; border: 3px solid #f00; }
.big .thumb { flex: 338; }
.big .rest { flex: 190; }

/* status */
.status { height: 22px; flex: none; display: flex; gap: 2px; padding: 1px 0; background: #f0f0f0; }
.status div { border: 1px solid #d4d4d4; background: linear-gradient(#fafafa, #f0f0f0); padding-left: 1px; line-height: 20px; white-space: nowrap; overflow: hidden; }
.s1 { width: 148px; } .s2 { width: 78px; } .s3 { width: 98px; } .s4 { width: 48px; } .s5 { flex: 1; } .s6 { width: 70px; }

/* taskbar */
.taskbar { height: 40px; flex: none; display: flex; background: #000c10; color: #fff; }
.start { width: 48px; display: flex; align-items: center; justify-content: center; }
.find { width: 344px; display: flex; align-items: center; padding: 0 12px 0 9px; background: #333; }
.ring { width: 22px; height: 22px; border: 3px solid #f0f0f0; border-radius: 50%; }
.find input { flex: 1; border: 0; background: none; padding: 0 5px; font-family: inherit; font-size: 14px; color: #fff; }
.find input::placeholder { color: #999; opacity: 1; }
.m { width: 18px; height: 18px; }
.apps { display: flex; gap: 1px; padding-left: 2px; }
.apps button { width: 49px; display: flex; align-items: center; justify-content: center; }
.apps svg { width: 22px; height: 22px; }
.run { background: linear-gradient(#76b9ed, #76b9ed) bottom / 40px 2px no-repeat; }
.run.on { background: linear-gradient(#76b9ed, #76b9ed) bottom / 48px 2px no-repeat, #343c3f; }
.apps .on svg { width: 24px; height: 24px; }
.apps .outline { width: 20px; height: 20px; fill: none; stroke: #ddd; stroke-width: 2; }
.apps { gap: 0; }
.azure { fill: url(#gG); }
.teal { fill: #3a9cc0; }
.tray { margin-left: auto; display: flex; align-items: center; gap: 8px; line-height: 18px; }
.cpu { text-align: center; margin-right: 10px; }
.t { width: 16px; height: 16px; }
.ime { font-size: 14px; margin-right: 4px; }
.clock { text-align: center; margin-left: 10px; }
.notif { position: relative; margin: 0 19px 0 11px; }
.notif span { position: absolute; left: 8px; top: 6px; width: 16px; height: 16px; border: 1px solid #777; border-radius: 50%; background: #222; font-size: 11px; line-height: 14px; text-align: center; font-weight: 700; }
.peek { width: 4px; height: 40px; border-left: 1px solid #556; margin-left: -4px; }

/* floating overlays */
.sogou { position: absolute; left: 928px; top: 16px; display: flex; align-items: flex-start; }
.slogo { width: 28px; height: 28px; z-index: 1; }
.simes { display: flex; align-items: center; gap: 6px; height: 24px; margin: 3px 0 0 -20px; padding: 0 3px 0 25px; background: #fff; border: 1px solid #a8c4e4; }
.simes svg { width: 16px; height: 16px; }
.simes span { width: 14px; font-size: 14px; font-weight: 700; color: #1c74c8; }
.ball { position: absolute; left: 1107px; top: -30px; width: 48px; height: 48px; border: 2px solid #ccc; border-radius: 50%; background: #3cbf5a; box-shadow: 0 1px 5px #888; color: #fff; text-align: center; line-height: 16px; padding-top: 27px; font-weight: 600; }
```
